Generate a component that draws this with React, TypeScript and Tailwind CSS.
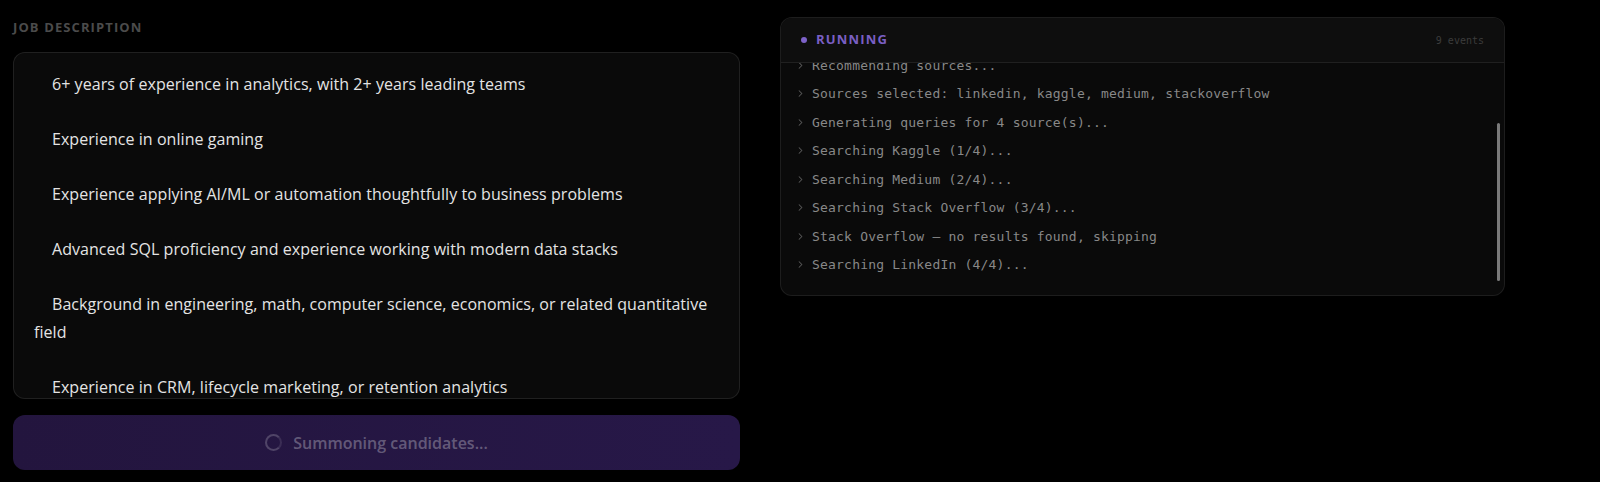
import { ChevronRight } from "lucide-react";

const requirements = [
  "6+ years of experience in analytics, with 2+ years leading teams",
  "Experience in online gaming",
  "Experience applying AI/ML or automation thoughtfully to business problems",
  "Advanced SQL proficiency and experience working with modern data stacks",
  "Background in engineering, math, computer science, economics, or related quantitative field",
  "Experience in CRM, lifecycle marketing, or retention analytics",
  "Strong communication skills and a bias for action",
];

const events = [
  "Analyzing job description...",
  "Recommending sources...",
  "Sources selected: linkedin, kaggle, medium, stackoverflow",
  "Generating queries for 4 source(s)...",
  "Searching Kaggle (1/4)...",
  "Searching Medium (2/4)...",
  "Searching Stack Overflow (3/4)...",
  "Stack Overflow — no results found, skipping",
  "Searching LinkedIn (4/4)...",
];

export default function App() {
  return (
    <div className="h-[482px] w-full overflow-hidden bg-black font-['Open_Sans',sans-serif]">
      <div className="flex items-start gap-[40px] pl-[13px] pt-[17px]">
        {/* left column */}
        <div className="flex w-[727px] flex-col">
          <div className="pt-[1px] text-[13px] font-bold uppercase leading-[19px] tracking-[1.1px] text-[#4b4b4b]">
            Job description
          </div>
          <div className="mt-[15px] h-[347px] overflow-hidden rounded-xl border border-white/[0.09] bg-[#0a0a0a] px-5 pt-[18px]">
            <div className="space-y-[27.5px] text-[16px] leading-[27.5px] tracking-[0.05px] text-[#e4e4e4]">
              {requirements.map((r) => (
                <p key={r} className="indent-[18px]">
                  {r}
                </p>
              ))}
            </div>
          </div>
          <button className="mt-[16px] flex h-[55px] w-full items-center justify-center gap-[11px] rounded-xl bg-gradient-to-r from-[#23153e] to-[#271848] text-[16px] font-semibold text-white/30">
            <span className="h-[17px] w-[17px] rounded-full border-2 border-white/20 border-r-white/10" />
            Summoning candidates...
          </button>
        </div>

        {/* right column: event log */}
        <div className="w-[725px] overflow-hidden rounded-xl border border-white/[0.08] bg-[#0a0a0a]">
          <div className="flex h-[45px] items-center justify-between border-b border-white/[0.08] bg-[#0e0e0e] px-[20px]">
            <div className="flex items-center gap-[9px]">
              <span className="h-[6px] w-[6px] rounded-full bg-[#7d62c9]" />
              <span className="text-[13px] font-bold uppercase tracking-[1.2px] text-[#7a5fc4]">Running</span>
            </div>
            <span className="font-['DejaVu_Sans_Mono',monospace] text-[10px] text-[#3c3c3c]">9 events</span>
          </div>
          <div className="relative h-[232px] overflow-hidden">
            <div className="-mt-[40.5px] font-['DejaVu_Sans_Mono',monospace] text-[13px] tracking-[0.2px] text-[#888888]">
              {events.map((e) => (
                <div key={e} className="flex h-[28.5px] items-center gap-[6px] pl-[14px]">
                  <ChevronRight className="h-[11px] w-[11px] text-[#5a5a5a]" strokeWidth={2.2} />
                  <span>{e}</span>
                </div>
              ))}
            </div>
            <div className="absolute right-[4px] top-[60px] h-[158px] w-[3px] rounded-full bg-[#7a7a7a]" />
          </div>
        </div>
      </div>
    </div>
  );
}
